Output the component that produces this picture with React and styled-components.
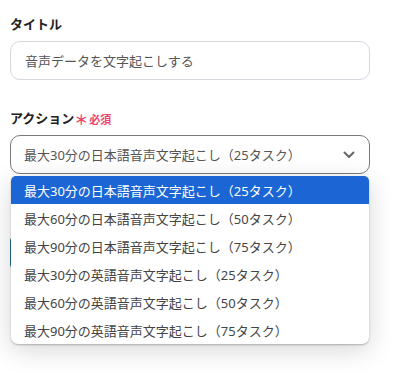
import React from "react";
import styled, { createGlobalStyle } from "styled-components";

const Global = createGlobalStyle`
  html, body { margin: 0; padding: 0; background: #fff; }
  body { font-family: "Noto Sans", "Noto Sans CJK JP", sans-serif; }
`;

const Page = styled.div`
  width: 380px;
  min-height: 373px;
  box-sizing: border-box;
  padding: 14px 10px 0;
  display: flex;
  flex-direction: column;
`;

const Field = styled.div`
  display: flex;
  flex-direction: column;
  gap: 7px;
  margin-bottom: ${(p) => p.$mb || 0}px;
  position: relative;
`;

const Label = styled.div`
  height: 20px;
  font-size: 13px;
  line-height: 20px;
  font-weight: 700;
  color: #222;
  display: flex;
  align-items: center;
`;

const Required = styled.span`
  color: #ee4470;
  font-size: 11px;
  line-height: 20px;
  font-weight: 700;
  display: inline-flex;
  align-items: center;
  gap: 1px;
  margin-top: 3px;
`;

const Star = styled.span`
  font-size: 14px;
  line-height: 1;
`;

const TextInput = styled.div`
  height: 37px;
  border: 1px solid #d7d7df;
  border-radius: 10px;
  display: flex;
  align-items: center;
  padding: 0 14px;
  font-size: 13px;
  color: #555;
`;

const Select = styled.div`
  height: 37px;
  border: 1px solid #7a7a7a;
  border-radius: 10px;
  display: flex;
  align-items: center;
  justify-content: space-between;
  padding: 0 14px 0 13px;
  font-size: 13px;
  color: #555;
`;

const Menu = styled.ul`
  position: absolute;
  top: 68px;
  left: 1px;
  right: 1px;
  margin: 0;
  padding: 0;
  list-style: none;
  background: #fff;
  border-radius: 5px 5px 7px 7px;
  overflow: hidden;
  box-shadow: 0 1px 2px rgba(0, 0, 0, 0.25), 0 6px 26px rgba(0, 0, 0, 0.16);
  z-index: 2;
`;

const Item = styled.li`
  height: 28px;
  display: flex;
  align-items: center;
  padding-left: 13px;
  font-size: 13px;
  color: ${(p) => (p.$active ? "#fff" : "#444")};
  background: ${(p) => (p.$active ? "#1b66d4" : "transparent")};
`;

const NextButton = styled.div`
  margin-top: 63px;
  width: 120px;
  height: 31px;
  border-radius: 4px;
  background: #1d7287;
`;

const options = [
  "最大30分の日本語音声文字起こし（25タスク）",
  "最大60分の日本語音声文字起こし（50タスク）",
  "最大90分の日本語音声文字起こし（75タスク）",
  "最大30分の英語音声文字起こし（25タスク）",
  "最大60分の英語音声文字起こし（50タスク）",
  "最大90分の英語音声文字起こし（75タスク）",
];

export default function App() {
  return (
    <>
      <Global />
      <Page>
        <Field $mb={28}>
          <Label>タイトル</Label>
          <TextInput>音声データを文字起こしする</TextInput>
        </Field>
        <Field>
          <Label>
            アクション
            <Required>
              <Star>＊</Star>必須
            </Required>
          </Label>
          <Select>
            <span>{options[0]}</span>
            <svg width="12" height="8" viewBox="0 0 12 8" fill="none">
              <path d="M1.5 1.5 L6 6 L10.5 1.5" stroke="#666" strokeWidth="2" strokeLinecap="round" strokeLinejoin="round" />
            </svg>
          </Select>
          <Menu>
            {options.map((o, i) => (
              <Item key={o} $active={i === 0}>
                {o}
              </Item>
            ))}
          </Menu>
        </Field>
        <NextButton />
      </Page>
    </>
  );
}
